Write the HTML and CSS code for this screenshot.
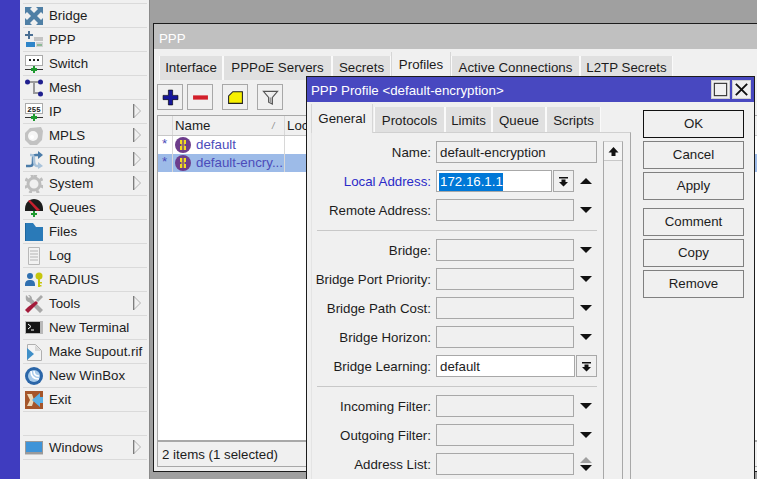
FILE: index.html
```html
<!DOCTYPE html>
<html lang="en">
<head>
<meta charset="utf-8">
<title>WinBox PPP Profile</title>
<link rel="stylesheet" href="styles.css">
</head>
<body>
<div class="strip"></div>
<nav class="menu">
  <div class="item"><svg class="ic" viewBox="0 0 18 18"><path fill="#4f7fa5" d="M0 0h7L5 2l4 4 4-4-2-2h7v7l-2-2-4 4 4 4 2-2v7h-7l2-2-4-4-4 4 2 2H0v-7l2 2 4-4-4-4-2 2z"/></svg><span>Bridge</span></div>
  <div class="item"><svg class="ic" viewBox="0 0 18 18"><path fill="#4a6f94" d="M3 0h2v3h3v2H5v3H3V5H0V3h3z"/><rect x="9" y="6" width="9" height="4" fill="#c4c4c4"/><rect x="1" y="11" width="9" height="5" fill="#2f85c9"/><rect x="11" y="11" width="7" height="5" fill="#d2d2d2"/><path stroke="#4aa05a" d="M12 14h5"/></svg><span>PPP</span></div>
  <div class="item"><svg class="ic" viewBox="0 0 18 18"><rect x=".5" y=".5" width="17" height="10" fill="#fff" stroke="#aaa"/><rect x="4" y="4" width="2" height="2" fill="#222"/><rect x="8" y="4" width="2" height="2" fill="#222"/><rect x="12" y="4" width="2" height="2" fill="#222"/><path stroke="#333" d="M0 14.500h18"/><path fill="#1f9a2f" d="M8 11h2v2h2v3h-2v2H8v-2H6v-3h2z"/></svg><span>Switch</span></div>
  <div class="item"><svg class="ic" viewBox="0 0 18 18"><path fill="none" stroke="#9a9a9a" stroke-width="2" d="M3 3h13M9 3v11h6"/><circle cx="2.500" cy="3" r="2.500" fill="#20208f"/><circle cx="15.500" cy="3" r="2.500" fill="#20208f"/><circle cx="15.500" cy="15" r="2.500" fill="#20208f"/></svg><span>Mesh</span></div>
  <div class="item"><svg class="ic" viewBox="0 0 18 18"><rect x=".5" y=".5" width="17" height="10" fill="#fff" stroke="#aaa"/><text x="9" y="8.500" class="ip">255</text><path stroke="#333" d="M0 14.500h18"/><path fill="#1f9a2f" d="M8 11h2v2h2v3h-2v2H8v-2H6v-3h2z"/></svg><span>IP</span><svg class="sub" viewBox="0 0 8 14"><path fill="none" stroke="#b0b0b0" d="M1 .5L7.500 7 1 13.500"/><path stroke="#707070" stroke-width="1.200" d="M.7 0v14"/></svg></div>
  <div class="item"><svg class="ic" viewBox="0 0 18 18"><path fill="#c2c2c2" d="M5 1l11-1 2 4-1 9-5 5-7 0-5-5V6z"/><circle cx="8" cy="9" r="5" fill="#f6f6f6"/><circle cx="7" cy="10" r="2" fill="#fff"/></svg><span>MPLS</span><svg class="sub" viewBox="0 0 8 14"><path fill="none" stroke="#b0b0b0" d="M1 .5L7.500 7 1 13.500"/><path stroke="#707070" stroke-width="1.200" d="M.7 0v14"/></svg></div>
  <div class="item"><svg class="ic" viewBox="0 0 18 18"><path fill="none" stroke="#4a7ba8" stroke-width="2.500" d="M1 15h4c3 0 3-2 3-6s0-5 3-5h2"/><path fill="none" stroke="#a9c3da" stroke-width="2.500" d="M5 4h1c3 0 3 2 3 5s0 6 3 6h1"/><path fill="#4a7ba8" d="M13 0l5 4-5 4z"/><path fill="#a9c3da" d="M13 11l5 4-5 3z"/></svg><span>Routing</span><svg class="sub" viewBox="0 0 8 14"><path fill="none" stroke="#b0b0b0" d="M1 .5L7.500 7 1 13.500"/><path stroke="#707070" stroke-width="1.200" d="M.7 0v14"/></svg></div>
  <div class="item"><svg class="ic" viewBox="0 0 18 18"><circle cx="9" cy="9" r="6" fill="none" stroke="#bdbdbd" stroke-width="3"/><path stroke="#bdbdbd" stroke-width="3" stroke-dasharray="3 4.070" fill="none" d="M9 .5a8.500 8.500 0 1 1-.01 0"/></svg><span>System</span><svg class="sub" viewBox="0 0 8 14"><path fill="none" stroke="#b0b0b0" d="M1 .5L7.500 7 1 13.500"/><path stroke="#707070" stroke-width="1.200" d="M.7 0v14"/></svg></div>
  <div class="item"><svg class="ic" viewBox="0 0 18 18"><path fill="#1c1c1c" d="M0 10C0 4 4 0 9 0s9 4 9 10v2H0z"/><path fill="#c8202e" d="M3 2l2-1 10 10-3 1z"/><path fill="#1f9a2f" d="M8 12h2v2h2v2h-2v2H8v-2H6v-2h2z"/></svg><span>Queues</span></div>
  <div class="item"><svg class="ic" viewBox="0 0 18 18"><path fill="#2a7ab8" d="M0 0h8l3 4h7v14H0z"/><path fill="#1e669e" d="M0 0h1v18H0z"/></svg><span>Files</span></div>
  <div class="item"><svg class="ic" viewBox="0 0 18 18"><path fill="#f2f2f2" stroke="#b8b8b8" d="M3.500.5h11v17h-11z"/><path stroke="#b4b4b4" d="M5 4h8M5 7h8M5 10h8M5 13h8"/></svg><span>Log</span></div>
  <div class="item"><svg class="ic" viewBox="0 0 18 18"><circle cx="5" cy="5" r="3" fill="#2f6fb0"/><path fill="#2f6fb0" d="M0 14c0-4 2-5 5-5s5 1 5 5v1H0z"/><circle cx="14" cy="5" r="3.500" fill="#c6c60e"/><path fill="#c6c60e" d="M13 7h2v9h-2zM15 11h2v1.500h-2zM15 14h1.500v1.500H15z"/></svg><span>RADIUS</span></div>
  <div class="item"><svg class="ic" viewBox="0 0 18 18"><path fill="#a8a8a8" d="M1 0l3 3 1-1-2-2c3 0 4 2 4 4l11 11-3 3L4 7C2 7 0 5 1 0z"/><path fill="#a8a8a8" d="M16 0l2 2-5 5-2-2z"/><path fill="#a31a3a" d="M11 6l2 2-7 7-3 3-3-3 3-3z"/></svg><span>Tools</span><svg class="sub" viewBox="0 0 8 14"><path fill="none" stroke="#b0b0b0" d="M1 .5L7.500 7 1 13.500"/><path stroke="#707070" stroke-width="1.200" d="M.7 0v14"/></svg></div>
  <div class="item"><svg class="ic" viewBox="0 0 18 18"><rect y="2" width="18" height="13" fill="#b9b9b9"/><rect x="1" y="3" width="14" height="11" fill="#151515"/><path fill="none" stroke="#fff" d="M3 5l3 2.500-3 2.500M6 11h3"/></svg><span>New Terminal</span></div>
  <div class="item"><svg class="ic" viewBox="0 0 18 18"><path fill="#f4f4f4" stroke="#b0b0b0" d="M2.500 1.500h8l6 6v10h-14z"/><path fill="#d8d8d8" d="M10 2v6h6z"/><path fill="#3f8fc8" d="M2 5l7 6-7 6z"/></svg><span>Make Supout.rif</span></div>
  <div class="item"><svg class="ic" viewBox="0 0 18 18"><circle cx="9" cy="9" r="9" fill="#2b66a8"/><circle cx="9" cy="9" r="6" fill="#a8cbea"/><path fill="none" stroke="#fff" stroke-width="1.600" d="M6 4c0 5 3 8 8 8M9 4c0 3 2 5 5 5"/></svg><span>New WinBox</span></div>
  <div class="item"><svg class="ic" viewBox="0 0 18 18"><rect width="18" height="18" fill="#a5552a"/><path fill="#edd9b8" d="M2 3h5l2 6-2 6H2l3-6z"/><path fill="#5ab0e6" d="M18 6h-3V2L7 9l8 7v-4h3z"/></svg><span>Exit</span></div>
  <div class="item"></div>
  <div class="item"><svg class="ic" viewBox="0 0 18 18"><rect y="2" width="18" height="13" fill="#9a9a9a"/><rect x="1" y="3" width="16" height="10" fill="#3f94d8"/><rect y="15" width="18" height="1" fill="#c9c9c9"/></svg><span>Windows</span><svg class="sub" viewBox="0 0 8 14"><path fill="none" stroke="#b0b0b0" d="M1 .5L7.500 7 1 13.500"/><path stroke="#707070" stroke-width="1.200" d="M.7 0v14"/></svg></div>
</nav>
<main class="desktop">
  <section class="win ppp">
    <header class="ppp-title">PPP</header>
    <div class="tabs ppp-tabs">
      <div class="tab t-int">Interface</div>
      <div class="tab t-srv">PPPoE Servers</div>
      <div class="tab t-sec">Secrets</div>
      <div class="tab active t-pro">Profiles</div>
      <div class="tab t-act">Active Connections</div>
      <div class="tab t-l2">L2TP Secrets</div>
    </div>
    <div class="toolbar">
      <button class="tool"><svg viewBox="0 0 16 16"><path fill="#16169a" stroke="#000" stroke-width=".6" d="M6 1h4v5h5v4h-5v5H6v-5H1V6h5z"/></svg></button>
      <button class="tool"><svg viewBox="0 0 16 16"><rect x="1" y="6" width="14" height="4" fill="#d21f2a"/></svg></button>
      <button class="tool gap-l"><svg viewBox="0 0 16 16"><path fill="#f8f000" stroke="#222" d="M5.500 2.500h9v11h-13v-7z"/></svg></button>
      <button class="tool gap-l"><svg viewBox="0 0 18 18"><path fill="#eee" stroke="#555" stroke-width="1.200" d="M1.500 2.500h15L11 9v7l-4-2V9z"/><path fill="#999" d="M8 9h2v6l-2-1z"/></svg></button>
    </div>
    <div class="table">
      <div class="thead">
        <div class="gutter"></div>
        <div class="col-name">Name<span class="sort">/</span></div>
        <div class="col-loc">Loc</div>
      </div>
      <div class="tr">
        <div class="gutter star">*</div>
        <div class="col-name"><svg class="prof" viewBox="0 0 16 16"><circle cx="8" cy="8" r="8" fill="#6d3d8c"/><path fill="#f2dc20" d="M5 3h6v4H9.500v2H11v4H5V9h1.500V7H5z"/><rect x="7.300" y="1" width="1.400" height="14" fill="#6d3d8c"/></svg>default</div>
        <div class="col-loc"></div>
      </div>
      <div class="tr sel">
        <div class="gutter star">*</div>
        <div class="col-name"><svg class="prof" viewBox="0 0 16 16"><circle cx="8" cy="8" r="8" fill="#6d3d8c"/><path fill="#f2dc20" d="M5 3h6v4H9.500v2H11v4H5V9h1.500V7H5z"/><rect x="7.300" y="1" width="1.400" height="14" fill="#6d3d8c"/></svg>default-encry...</div>
        <div class="col-loc"></div>
      </div>
      <div class="tfill"></div>
    </div>
    <div class="status">2 items (1 selected)</div>
  </section>

  <section class="win dlg">
    <header class="dlg-title">
      <span class="dlg-name">PPP Profile &lt;default-encryption&gt;</span>
      <span class="wbtn"><svg viewBox="0 0 18 18"><rect x="2.500" y="2.500" width="13" height="13" fill="none" stroke="#333" stroke-width="1.200"/></svg></span>
      <span class="wbtn"><svg viewBox="0 0 18 18"><path stroke="#111" stroke-width="2" d="M3 3l12 12M15 3L3 15"/></svg></span>
    </header>
    <div class="dlg-body">
      <div class="dlg-main">
        <div class="tabs dlg-tabs">
          <div class="tab active d-gen">General</div>
          <div class="tab d-pro">Protocols</div>
          <div class="tab d-lim">Limits</div>
          <div class="tab d-que">Queue</div>
          <div class="tab d-scr">Scripts</div>
        </div>
        <div class="panel">
          <div class="form">
            <div class="row"><label>Name:</label><div class="ctl"><div class="field grow">default-encryption</div></div></div>
            <div class="row"><label class="blue">Local Address:</label><div class="ctl"><div class="field on w-local"><span class="hl">172.16.1.1</span></div><span class="drop"><svg viewBox="0 0 11 11"><path fill="#111" d="M1 1h9v1.500H1zM3.500 3.500h4V6H10l-4.500 4.500L1 6h2.500z"/></svg></span><span class="tri up"></span></div></div>
            <div class="row"><label>Remote Address:</label><div class="ctl"><div class="field grow"></div><span class="tri"></span></div></div>
            <hr class="sep">
            <div class="row"><label>Bridge:</label><div class="ctl"><div class="field grow"></div><span class="tri"></span></div></div>
            <div class="row"><label>Bridge Port Priority:</label><div class="ctl"><div class="field grow"></div><span class="tri"></span></div></div>
            <div class="row"><label>Bridge Path Cost:</label><div class="ctl"><div class="field grow"></div><span class="tri"></span></div></div>
            <div class="row"><label>Bridge Horizon:</label><div class="ctl"><div class="field grow"></div><span class="tri"></span></div></div>
            <div class="row"><label>Bridge Learning:</label><div class="ctl"><div class="field on grow">default</div><span class="drop"><svg viewBox="0 0 11 11"><path fill="#111" d="M1 1h9v1.500H1zM3.500 3.500h4V6H10l-4.500 4.500L1 6h2.500z"/></svg></span></div></div>
            <hr class="sep">
            <div class="row"><label>Incoming Filter:</label><div class="ctl"><div class="field grow"></div><span class="tri"></span></div></div>
            <div class="row"><label>Outgoing Filter:</label><div class="ctl"><div class="field grow"></div><span class="tri"></span></div></div>
            <div class="row"><label>Address List:</label><div class="ctl"><div class="field grow"></div><span class="updown"><i class="tri-s up grey"></i><i class="tri-s"></i></span></div></div>
          </div>
          <div class="scroll"><span class="scroll-up"><svg viewBox="0 0 11 11"><path fill="#111" d="M5.500 1L10.500 6.500H7.500V10h-4V6.500h-3z"/></svg></span></div>
        </div>
      </div>
      <div class="actions">
        <button class="btn default">OK</button>
        <button class="btn">Cancel</button>
        <button class="btn">Apply</button>
        <button class="btn spaced">Comment</button>
        <button class="btn">Copy</button>
        <button class="btn">Remove</button>
      </div>
    </div>
  </section>
</main>
</body>
</html>
```
FILE: styles.css
```css
* { box-sizing: border-box; }
html, body { margin: 0; height: 479px; overflow: hidden; }
body {
  display: flex;
  font: 13.3px/16px "Liberation Sans", Arial, sans-serif;
  color: #1c1c1c;
  background: #a0a0a0;
}
.strip { width: 20px; background: #3f3cbf; flex: none; }

.menu {
  width: 130px;
  flex: none;
  background: #f0f0f0;
  padding: 3px 2px 0 3px;
  border-right: 1px solid #8a8a8a;
}
.item {
  height: 24px;
  display: flex;
  align-items: center;
  position: relative;
  border-top: 1px solid #dadada;
  padding-left: 2px;
}
.item:last-child { border-bottom: 1px solid #dadada; height: 25px; }
.ic { width: 18px; height: 18px; flex: none; margin-right: 6px; }
.ip { font: bold 7.5px "Liberation Mono", monospace; text-anchor: middle; fill: #222; }
.item span { white-space: nowrap; }
.sub { position: absolute; left: 110px; top: 4px; width: 8px; height: 14px; }

.desktop { flex: 1; position: relative; overflow: hidden; }
.win { position: absolute; background: #f0f0f0; border: 1px solid #1c1c1c; }

.ppp { left: 3px; top: 23px; width: 640px; height: 449px; display: flex; flex-direction: column; }
.ppp-title { height: 25px; background: #c0c0c0; color: #fff; padding: 7px 5px 0; flex: none; }

.tabs { display: flex; align-items: flex-end; }
.tab {
  height: 24px;
  padding-top: 4px;
  text-align: center;
  background: #e0e0e0;
  border-right: 1px solid #fafafa;
  border-left: 1px solid #fafafa;
  flex: none;
  white-space: nowrap;
}
.tab.active { background: #f0f0f0; height: 28px; border-color: #d6d6d6; }
.ppp-tabs { height: 31px; padding-left: 5px; flex: none; }
.t-int { width: 64px; }
.t-srv { width: 109px; }
.t-sec { width: 59px; }
.t-pro { width: 60px; padding-top: 5px; }
.t-act { width: 129px; }
.t-l2 { width: 93px; }

.toolbar { display: flex; gap: 4px; padding: 4px 0 0 3px; height: 35px; flex: none; }
.tool {
  width: 26px;
  height: 26px;
  padding: 0;
  background: #f0f0f0;
  border: 1px solid #a8a8a8;
  display: flex;
  align-items: center;
  justify-content: center;
}
.tool svg { width: 17px; height: 17px; }
.gap-l { margin-left: 5px; }

.table {
  margin-left: 3px;
  flex: 1;
  min-height: 0;
  background: #fff;
  border-top: 1px solid #a8a8a8;
  border-left: 1px solid #a8a8a8;
  display: flex;
  flex-direction: column;
}
.thead, .tr { display: flex; flex: none; }
.thead { height: 20px; background: #f0f0f0; border-bottom: 1px solid #c8c8c8; }
.tr { height: 18px; }
.gutter { width: 15px; flex: none; border-right: 1px solid #d8d8d8; }
.star { color: #4a4ab8; padding-left: 4px; line-height: 16px; }
.col-name {
  width: 112px;
  flex: none;
  display: flex;
  align-items: center;
  position: relative;
  padding-left: 2px;
  border-right: 1px solid #d8d8d8;
  white-space: nowrap;
}
.tr .col-name { color: #4c4cba; padding-left: 2px; }
.col-loc { flex: 1; padding: 2px 0 0 2px; white-space: nowrap; }
.sort { position: absolute; left: 99px; top: 2px; font-size: 9px; color: #888; font-style: italic; }
.prof { width: 16px; height: 16px; margin-right: 5px; flex: none; }
.sel { background: #9dbbe8; }
.tfill { flex: 1; }
.status {
  height: 27px;
  flex: none;
  margin-left: 3px;
  padding: 5px 0 0 4px;
  border-top: 2px solid #a8a8a8;
  border-bottom: 1px solid #a8a8a8;
  margin-bottom: 4px;
  border-left: 1px solid #a8a8a8;
}

.dlg { left: 156px; top: 76px; width: 449px; height: 420px; }
.dlg-title {
  height: 25px;
  background: #4848c0;
  color: #fff;
  display: flex;
  align-items: center;
  padding: 0 3px 0 4px;
}
.dlg-name { flex: 1; padding-top: 3px; }
.wbtn {
  width: 19px;
  height: 19px;
  margin-left: 2px;
  background: #f0f0f0;
  border: 1px solid #d0d0d0;
  display: flex;
}
.wbtn svg { width: 17px; height: 17px; }
.dlg-body { display: flex; padding: 0 0 0 4px; }
.dlg-main { width: 320px; flex: none; }
.dlg-tabs { height: 30px; }
.dlg-tabs .tab { height: 25px; padding-top: 6px; }
.dlg-tabs .tab.active { height: 29px; padding-top: 7px; margin-bottom: -1px; position: relative; z-index: 1; border-bottom: 0; }
.d-gen { width: 62px; }
.d-pro { width: 71px; margin-left: 1px; }
.d-lim { width: 47px; }
.d-que { width: 54px; }
.d-scr { width: 55px; }
.panel {
  display: flex;
  padding: 8px 8px 0 5px;
  border-top: 1px solid #d0d0d0;
  border-left: 1px solid #e4e4e4;
  border-right: 1px solid #a8a8a8;
  height: 380px;
}
.form { width: 280px; flex: none; display: flex; flex-direction: column; gap: 7px; }
.row { display: grid; grid-template-columns: 114px 161px; column-gap: 5px; height: 22px; align-items: center; flex: none; }
.row label { text-align: right; white-space: nowrap; justify-self: end; padding-top: 1px; }
.blue { color: #2a2ac8; }
.ctl { display: flex; height: 22px; align-items: center; }
.field {
  height: 22px;
  border: 1px solid #a8a8a8;
  background: #f0f0f0;
  padding: 3px 3px 0;
  white-space: nowrap;
}
.grow { flex: 1; min-width: 0; }
.field.on { background: #fff; }
.w-local { width: 116px; flex: none; }
.hl { background: #0078d7; color: #fff; display: inline-block; height: 18px; margin: -2px 0 0 -1px; padding: 1px 0 0 1px; }
.drop {
  width: 21px;
  height: 22px;
  margin-left: 1px;
  border: 1px solid #a8a8a8;
  flex: none;
  display: flex;
  align-items: center;
  justify-content: center;
}
.drop svg { width: 11px; height: 11px; }
.tri {
  flex: none;
  width: 12px;
  height: 0;
  margin: 0 5px 0 6px;
  border-left: 6px solid transparent;
  border-right: 6px solid transparent;
  border-top: 6px solid #111;
}
.tri.up { border-top: 0; border-bottom: 6px solid #111; }
.updown { display: flex; flex-direction: column; gap: 2px; align-items: center; margin: 0 5px 0 6px; width: 12px; flex: none; }
.tri-s {
  width: 12px;
  height: 0;
  border-left: 6px solid transparent;
  border-right: 6px solid transparent;
  border-top: 6px solid #111;
}
.tri-s.up { border-top: 0; border-bottom: 6px solid #111; }
.tri-s.grey { border-bottom-color: #a0a0a0; }
.sep { width: 100%; height: 1px; margin: 2px 0 1px; border: 0; background: #c8c8c8; flex: none; }
.scroll { width: 20px; margin-left: 6px; border: 1px solid #a8a8a8; border-top-color: #d0d0d0; flex: none; }
.scroll-up {
  display: flex;
  height: 19px;
  align-items: center;
  justify-content: center;
  border-bottom: 1px solid #c8c8c8;
  background: #f4f4f4;
}
.scroll-up svg { width: 11px; height: 11px; }

.actions { width: 101px; margin: 8px 0 0 12px; display: flex; flex-direction: column; gap: 3px; flex: none; }
.btn {
  height: 28px;
  padding: 0;
  font: inherit;
  color: inherit;
  background: #f0f0f0;
  border: 1px solid #808080;
}
.btn.default { border: 1.500px solid #111; }
.btn.spaced { margin-top: 5px; }
```
